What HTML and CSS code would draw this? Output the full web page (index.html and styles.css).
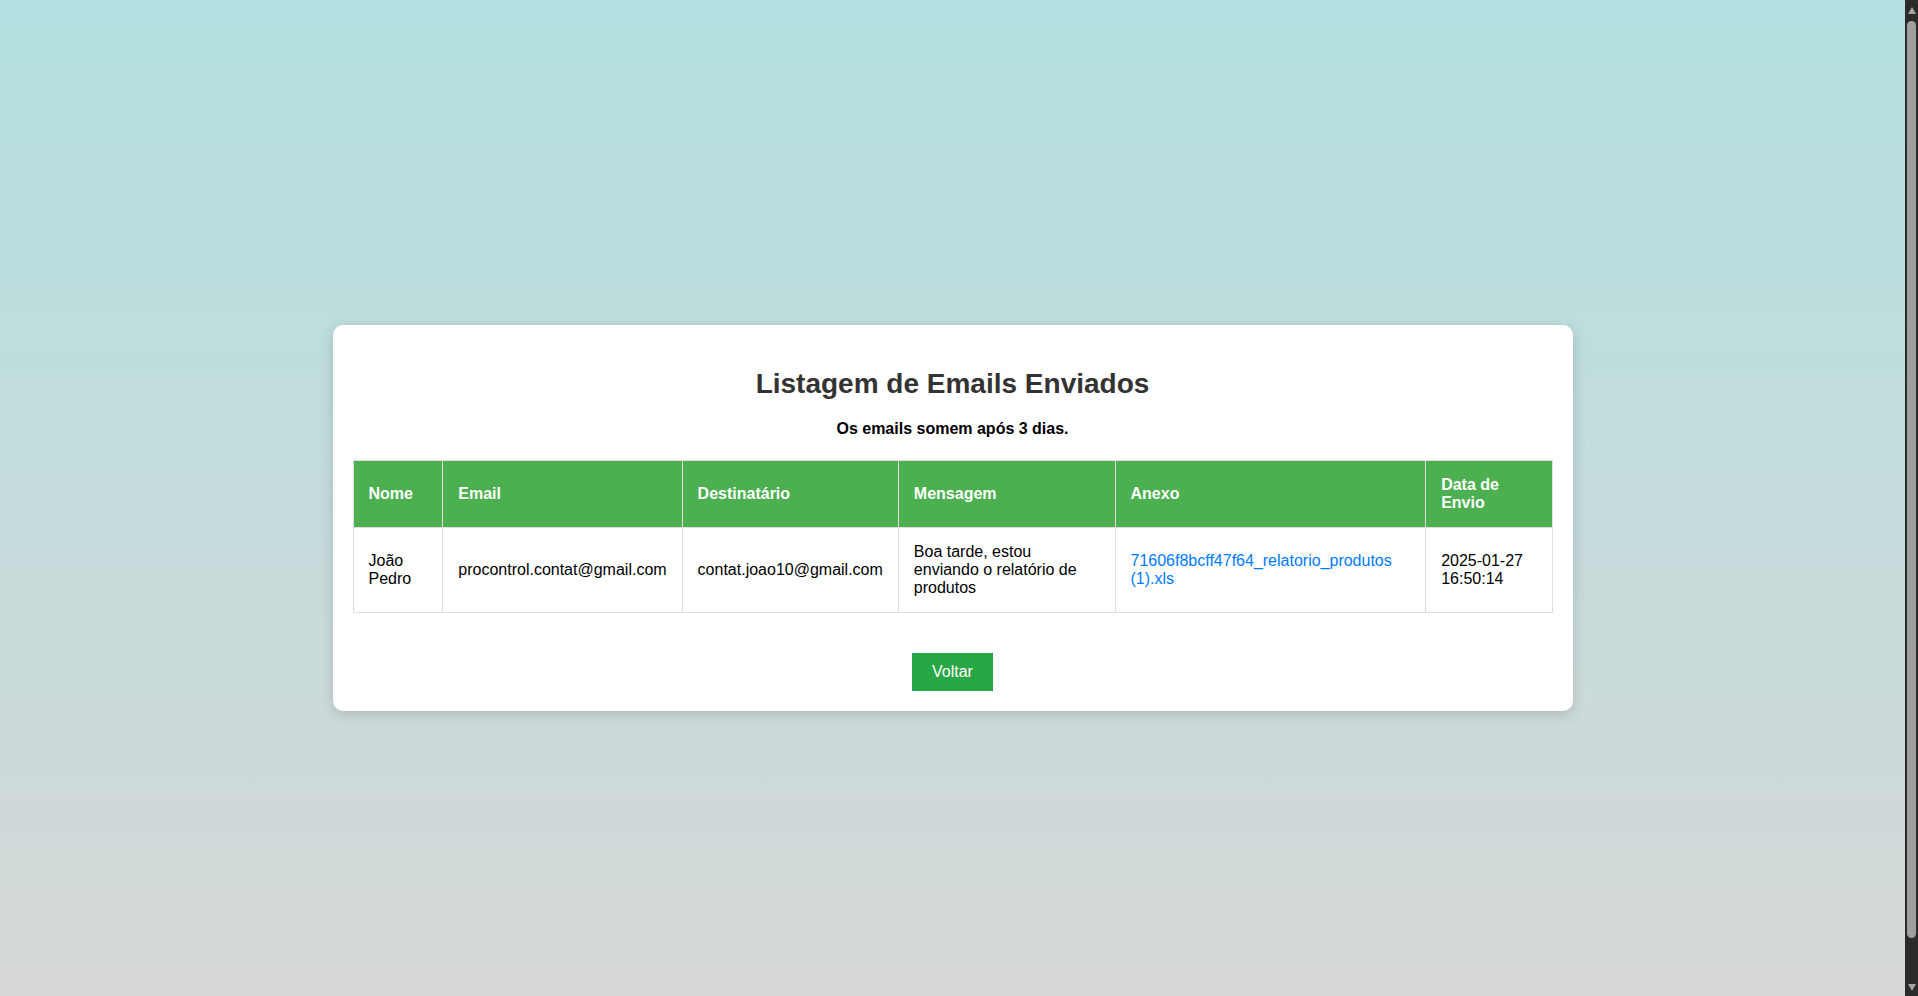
FILE: index.html
```html
<!DOCTYPE html>
<html lang="pt-BR">
<head>
<meta charset="UTF-8">
<title>Listagem de Emails Enviados</title>
<link rel="stylesheet" href="styles.css">
</head>
<body>
  <div class="viewport">
    <main class="page">
      <div class="container">
        <h2 class="title">Listagem de Emails Enviados</h2>
        <p class="note">Os emails somem após 3 dias.</p>
        <table class="emails">
          <thead>
            <tr>
              <th>Nome</th>
              <th>Email</th>
              <th>Destinatário</th>
              <th>Mensagem</th>
              <th>Anexo</th>
              <th>Data de Envio</th>
            </tr>
          </thead>
          <tbody>
            <tr>
              <td>João Pedro</td>
              <td>procontrol.contat@gmail.com</td>
              <td>contat.joao10@gmail.com</td>
              <td>Boa tarde, estou enviando o relatório de produtos</td>
              <td><a class="file-link" href="#">71606f8bcff47f64_relatorio_produtos (1).xls</a></td>
              <td>2025-01-27 16:50:14</td>
            </tr>
          </tbody>
        </table>
        <div class="actions">
          <a class="back-link" href="#"><span class="btn">Voltar</span></a>
        </div>
      </div>
    </main>
  </div>
  <div class="scrollbar" aria-hidden="true">
    <span class="sb-arrow sb-up"></span>
    <span class="sb-thumb"></span>
    <span class="sb-arrow sb-down"></span>
  </div>
</body>
</html>
```

FILE: styles.css
```css
html,
body {
  margin: 0;
  height: 100%;
  overflow: hidden;
}

body {
  display: flex;
  font-family: "Liberation Sans", Arial, sans-serif;
  font-size: 16px;
  color: #000;
  background: #d8d8d8;
}

.viewport {
  flex: 1;
  min-width: 0;
  overflow: hidden;
}

.page {
  min-height: 100vh;
  padding: 20px;
  display: flex;
  align-items: center;
  justify-content: center;
  background: linear-gradient(to bottom, #b2dfdf, #d8d8d8);
}

.container {
  width: 100%;
  max-width: 1200px;
  padding: 20px;
  background: #fff;
  border-radius: 10px;
  box-shadow: 0 4px 14px rgba(0, 0, 0, 0.15);
}

.title {
  font-size: 28px;
  font-weight: bold;
  color: #333;
  text-align: center;
  margin: 23.24px 0 20px;
}

.note {
  font-weight: bold;
  text-align: center;
  margin: 0 0 22px;
}

.emails {
  width: 100%;
  border-collapse: collapse;
  color: #000;
}

.emails th,
.emails td {
  border: 1px solid #ddd;
  padding: 15px;
  text-align: left;
}

.emails th {
  background: #4caf50;
  color: #fff;
  font-weight: bold;
}

.file-link {
  color: #007bff;
  text-decoration: none;
}

.actions {
  display: flex;
  justify-content: center;
  margin-top: 40px;
}

.back-link {
  display: block;
  background: #007bff;
  text-decoration: none;
}

.btn {
  display: block;
  padding: 10px 20px;
  background: #28a745;
  color: #fff;
  border-radius: 3px;
  line-height: normal;
}

/* browser scrollbar strip */
.scrollbar {
  flex: 0 0 13px;
  background: #2b2b2b;
  display: flex;
  flex-direction: column;
  align-items: center;
}

.sb-arrow {
  width: 0;
  height: 0;
  border-left: 4px solid transparent;
  border-right: 4px solid transparent;
}

.sb-up {
  margin-top: 7px;
  border-bottom: 7px solid #a3a3a3;
}

.sb-thumb {
  margin-top: 7px;
  width: 9px;
  height: 917px;
  border-radius: 5px;
  background: #9f9f9f;
}

.sb-down {
  margin-top: auto;
  margin-bottom: 5px;
  border-top: 7px solid #a3a3a3;
}
```
